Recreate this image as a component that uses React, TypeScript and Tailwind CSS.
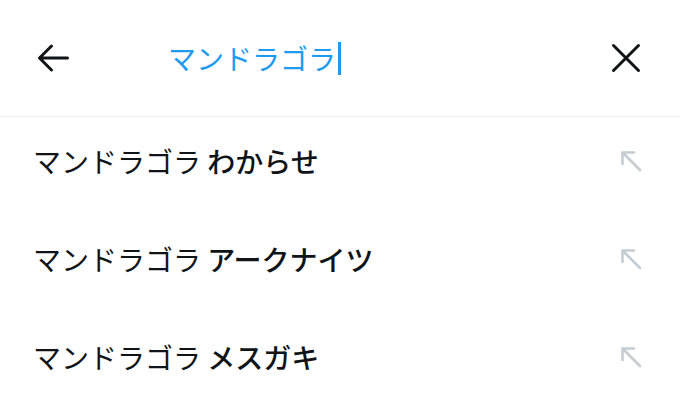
const suggestions = ["わからせ", "アークナイツ", "メスガキ"];

function BackIcon() {
    return (
        <svg width="32" height="30" viewBox="0 0 32 30" fill="none" stroke="currentColor" strokeWidth="3" strokeLinecap="round" strokeLinejoin="round">
            <path d="M30.5 15H2.5M14.5 3L2.5 15L14.5 27" />
        </svg>
    );
}

function CloseIcon() {
    return (
        <svg width="30" height="30" viewBox="0 0 30 30" fill="none" stroke="currentColor" strokeWidth="3" strokeLinecap="round">
            <path d="M2.5 2.5L27.5 27.5M27.5 2.5L2.5 27.5" />
        </svg>
    );
}

function FillIcon() {
    return (
        <svg width="22" height="22" viewBox="0 0 22 22" fill="none" stroke="currentColor" strokeWidth="2.6" strokeLinecap="round" strokeLinejoin="round">
            <path d="M20 20L2.5 2.5M2.5 14V2.5H14" />
        </svg>
    );
}

export default function App() {
    return (
        <main
            className="w-[680px] h-[405px] bg-white overflow-hidden"
            style={{ fontFamily: '"Noto Sans CJK JP", "Noto Sans", sans-serif' }}
        >
            {/* Search header */}
            <div className="h-[117px] pl-[37px] pr-[39px] flex items-center border-b border-[#eceef0] text-[#0f1419]">
                <BackIcon />
                <div className="flex-1 flex items-center ml-[99px]">
                    <span className="text-[28px] leading-none text-[#1d9bf0]">マンドラゴラ</span>
                    <span className="ml-[2px] w-[2.5px] h-[33px] bg-[#1d9bf0]" />
                </div>
                <CloseIcon />
            </div>

            {/* Suggestions */}
            <ul>
                {suggestions.map((s) => (
                    <li key={s} className="h-[98px] pb-[10px] pl-[33px] pr-[38px] flex items-center justify-between">
                        <span className="text-[28px] leading-none text-[#0f1419]">
                            マンドラゴラ <span className="font-medium">{s}</span>
                        </span>
                        <span className="text-[#c3cdd4]">
                            <FillIcon />
                        </span>
                    </li>
                ))}
            </ul>
        </main>
    );
}
